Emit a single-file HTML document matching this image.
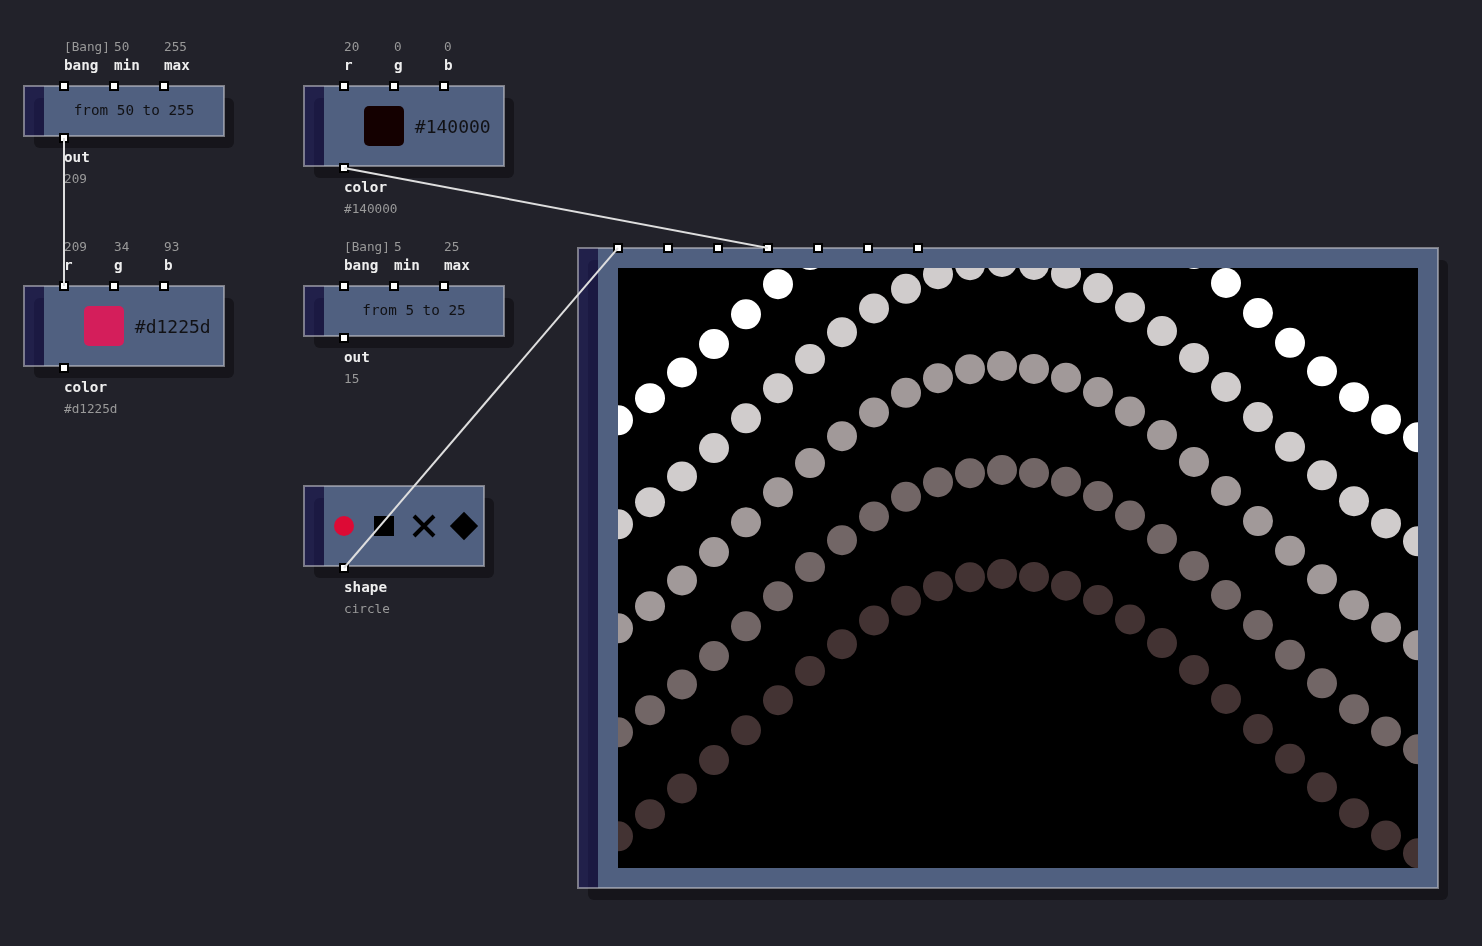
<!DOCTYPE html>
<html lang="en"><head><meta charset="utf-8"><title>RPD p5 patch</title>
<style>
html,body{margin:0;padding:0;background:#22222a;}
body{width:1482px;height:946px;overflow:hidden;font-family:"DejaVu Sans Mono","Liberation Mono",monospace;}
svg{display:block;position:absolute;left:0;top:0;will-change:transform;}
text{font-family:"DejaVu Sans Mono","Liberation Mono",monospace;}
.sh{fill:#16151b;}
.body{fill:#506080;}
.head{fill:rgba(32,30,106,0.5);}
.edge{fill:none;stroke:rgba(200,200,205,0.55);stroke-width:2;}
.cn{fill:#fff;stroke:#000;stroke-width:2;}
.lab{font-size:14.3px;font-weight:bold;fill:#eeeeee;}
.val{font-size:12.7px;fill:#999999;}
.bt{font-size:14.3px;fill:#111114;}
.hex{font-size:18px;fill:#111114;}
.mid{text-anchor:middle;}
</style></head>
<body>
<svg width="1482" height="946" viewBox="0 0 1482 946">
<defs><clipPath id="cv"><rect x="618" y="268" width="800" height="600"/></clipPath></defs>
<g id="shadows">
<rect class="sh" x="34" y="98" width="200" height="50" rx="6" ry="6"/>
<rect class="sh" x="314" y="98" width="200" height="80" rx="6" ry="6"/>
<rect class="sh" x="34" y="298" width="200" height="80" rx="6" ry="6"/>
<rect class="sh" x="314" y="298" width="200" height="50" rx="6" ry="6"/>
<rect class="sh" x="314" y="498" width="180" height="80" rx="6" ry="6"/>
<rect class="sh" x="588" y="260" width="860" height="640" rx="6" ry="6"/>
</g>
<g id="node-random-a">
<rect class="body" x="44" y="86" width="180" height="50"/>
<rect class="head" x="24" y="86" width="20" height="50"/>
<rect class="edge" x="24" y="86" width="200" height="50"/>
<text class="bt mid" x="134" y="114.8">from 50 to 255</text>
<text class="val" x="64" y="51">[Bang]</text>
<text class="lab" x="64" y="70">bang</text>
<text class="val" x="114" y="51">50</text>
<text class="lab" x="114" y="70">min</text>
<text class="val" x="164" y="51">255</text>
<text class="lab" x="164" y="70">max</text>
<text class="lab" x="64" y="162">out</text>
<text class="val" x="64" y="182.5">209</text>
<rect class="cn" x="60" y="82" width="8" height="8"/>
<rect class="cn" x="110" y="82" width="8" height="8"/>
<rect class="cn" x="160" y="82" width="8" height="8"/>
<rect class="cn" x="60" y="134" width="8" height="8"/>
</g>
<g id="node-color-b">
<rect class="body" x="324" y="86" width="180" height="80"/>
<rect class="head" x="304" y="86" width="20" height="80"/>
<rect class="edge" x="304" y="86" width="200" height="80"/>
<rect x="364" y="106" width="40" height="40" rx="5" ry="5" fill="#140000"/>
<text class="hex" x="414.8" y="133">#140000</text>
<text class="val" x="344" y="51">20</text>
<text class="lab" x="344" y="70">r</text>
<text class="val" x="394" y="51">0</text>
<text class="lab" x="394" y="70">g</text>
<text class="val" x="444" y="51">0</text>
<text class="lab" x="444" y="70">b</text>
<text class="lab" x="344" y="192">color</text>
<text class="val" x="344" y="212.5">#140000</text>
<rect class="cn" x="340" y="82" width="8" height="8"/>
<rect class="cn" x="390" y="82" width="8" height="8"/>
<rect class="cn" x="440" y="82" width="8" height="8"/>
<rect class="cn" x="340" y="164" width="8" height="8"/>
</g>
<g id="node-color-c">
<rect class="body" x="44" y="286" width="180" height="80"/>
<rect class="head" x="24" y="286" width="20" height="80"/>
<rect class="edge" x="24" y="286" width="200" height="80"/>
<rect x="84" y="306" width="40" height="40" rx="5" ry="5" fill="#d41e5b"/>
<text class="hex" x="134.8" y="333">#d1225d</text>
<text class="val" x="64" y="251">209</text>
<text class="lab" x="64" y="270">r</text>
<text class="val" x="114" y="251">34</text>
<text class="lab" x="114" y="270">g</text>
<text class="val" x="164" y="251">93</text>
<text class="lab" x="164" y="270">b</text>
<text class="lab" x="64" y="392">color</text>
<text class="val" x="64" y="412.5">#d1225d</text>
<rect class="cn" x="60" y="282" width="8" height="8"/>
<rect class="cn" x="110" y="282" width="8" height="8"/>
<rect class="cn" x="160" y="282" width="8" height="8"/>
<rect class="cn" x="60" y="364" width="8" height="8"/>
</g>
<g id="node-random-d">
<rect class="body" x="324" y="286" width="180" height="50"/>
<rect class="head" x="304" y="286" width="20" height="50"/>
<rect class="edge" x="304" y="286" width="200" height="50"/>
<text class="bt mid" x="414" y="314.8">from 5 to 25</text>
<text class="val" x="344" y="251">[Bang]</text>
<text class="lab" x="344" y="270">bang</text>
<text class="val" x="394" y="251">5</text>
<text class="lab" x="394" y="270">min</text>
<text class="val" x="444" y="251">25</text>
<text class="lab" x="444" y="270">max</text>
<text class="lab" x="344" y="362">out</text>
<text class="val" x="344" y="382.5">15</text>
<rect class="cn" x="340" y="282" width="8" height="8"/>
<rect class="cn" x="390" y="282" width="8" height="8"/>
<rect class="cn" x="440" y="282" width="8" height="8"/>
<rect class="cn" x="340" y="334" width="8" height="8"/>
</g>
<g id="node-shape">
<rect class="body" x="324" y="486" width="160" height="80"/>
<rect class="head" x="304" y="486" width="20" height="80"/>
<rect class="edge" x="304" y="486" width="180" height="80"/>
<circle cx="344" cy="526" r="10" fill="#dd0a35"/>
<rect x="374" y="516" width="20" height="20" fill="#000"/>
<path d="M414 516L434 536M434 516L414 536" stroke="#000" stroke-width="4" fill="none"/>
<path d="M464 511.86L478.14 526L464 540.14L449.86 526Z" fill="#000"/>
<text class="lab" x="344" y="592">shape</text>
<text class="val" x="344" y="612.5">circle</text>
<rect class="cn" x="340" y="564" width="8" height="8"/>
</g>
<g id="node-canvas">
<rect class="body" x="598" y="248" width="840" height="640"/>
<rect class="head" x="578" y="248" width="20" height="640"/>
<rect class="edge" x="578" y="248" width="860" height="640"/>
<rect x="618" y="268" width="800" height="600" fill="#000"/>
<g clip-path="url(#cv)">
<g fill="rgb(255,255,255)">
<circle cx="618" cy="420.30" r="15"/>
<circle cx="650" cy="398.18" r="15"/>
<circle cx="682" cy="372.43" r="15"/>
<circle cx="714" cy="344.08" r="15"/>
<circle cx="746" cy="314.27" r="15"/>
<circle cx="778" cy="284.22" r="15"/>
<circle cx="810" cy="255.12" r="15"/>
<circle cx="1194" cy="253.96" r="15"/>
<circle cx="1226" cy="282.99" r="15"/>
<circle cx="1258" cy="313.03" r="15"/>
<circle cx="1290" cy="342.87" r="15"/>
<circle cx="1322" cy="371.30" r="15"/>
<circle cx="1354" cy="397.19" r="15"/>
<circle cx="1386" cy="419.48" r="15"/>
<circle cx="1418" cy="437.27" r="15"/>
</g>
<g fill="rgb(208,204,204)">
<circle cx="618" cy="524.30" r="15"/>
<circle cx="650" cy="502.18" r="15"/>
<circle cx="682" cy="476.43" r="15"/>
<circle cx="714" cy="448.08" r="15"/>
<circle cx="746" cy="418.27" r="15"/>
<circle cx="778" cy="388.22" r="15"/>
<circle cx="810" cy="359.12" r="15"/>
<circle cx="842" cy="332.15" r="15"/>
<circle cx="874" cy="308.40" r="15"/>
<circle cx="906" cy="288.82" r="15"/>
<circle cx="938" cy="274.21" r="15"/>
<circle cx="970" cy="265.15" r="15"/>
<circle cx="1002" cy="262.00" r="15"/>
<circle cx="1034" cy="264.90" r="15"/>
<circle cx="1066" cy="273.72" r="15"/>
<circle cx="1098" cy="288.12" r="15"/>
<circle cx="1130" cy="307.51" r="15"/>
<circle cx="1162" cy="331.10" r="15"/>
<circle cx="1194" cy="357.96" r="15"/>
<circle cx="1226" cy="386.99" r="15"/>
<circle cx="1258" cy="417.03" r="15"/>
<circle cx="1290" cy="446.87" r="15"/>
<circle cx="1322" cy="475.30" r="15"/>
<circle cx="1354" cy="501.19" r="15"/>
<circle cx="1386" cy="523.48" r="15"/>
<circle cx="1418" cy="541.27" r="15"/>
</g>
<g fill="rgb(161,153,153)">
<circle cx="618" cy="628.30" r="15"/>
<circle cx="650" cy="606.18" r="15"/>
<circle cx="682" cy="580.43" r="15"/>
<circle cx="714" cy="552.08" r="15"/>
<circle cx="746" cy="522.27" r="15"/>
<circle cx="778" cy="492.22" r="15"/>
<circle cx="810" cy="463.12" r="15"/>
<circle cx="842" cy="436.15" r="15"/>
<circle cx="874" cy="412.40" r="15"/>
<circle cx="906" cy="392.82" r="15"/>
<circle cx="938" cy="378.21" r="15"/>
<circle cx="970" cy="369.15" r="15"/>
<circle cx="1002" cy="366.00" r="15"/>
<circle cx="1034" cy="368.90" r="15"/>
<circle cx="1066" cy="377.72" r="15"/>
<circle cx="1098" cy="392.12" r="15"/>
<circle cx="1130" cy="411.51" r="15"/>
<circle cx="1162" cy="435.10" r="15"/>
<circle cx="1194" cy="461.96" r="15"/>
<circle cx="1226" cy="490.99" r="15"/>
<circle cx="1258" cy="521.03" r="15"/>
<circle cx="1290" cy="550.87" r="15"/>
<circle cx="1322" cy="579.30" r="15"/>
<circle cx="1354" cy="605.19" r="15"/>
<circle cx="1386" cy="627.48" r="15"/>
<circle cx="1418" cy="645.27" r="15"/>
</g>
<g fill="rgb(114,102,102)">
<circle cx="618" cy="732.30" r="15"/>
<circle cx="650" cy="710.18" r="15"/>
<circle cx="682" cy="684.43" r="15"/>
<circle cx="714" cy="656.08" r="15"/>
<circle cx="746" cy="626.27" r="15"/>
<circle cx="778" cy="596.22" r="15"/>
<circle cx="810" cy="567.12" r="15"/>
<circle cx="842" cy="540.15" r="15"/>
<circle cx="874" cy="516.40" r="15"/>
<circle cx="906" cy="496.82" r="15"/>
<circle cx="938" cy="482.21" r="15"/>
<circle cx="970" cy="473.15" r="15"/>
<circle cx="1002" cy="470.00" r="15"/>
<circle cx="1034" cy="472.90" r="15"/>
<circle cx="1066" cy="481.72" r="15"/>
<circle cx="1098" cy="496.12" r="15"/>
<circle cx="1130" cy="515.51" r="15"/>
<circle cx="1162" cy="539.10" r="15"/>
<circle cx="1194" cy="565.96" r="15"/>
<circle cx="1226" cy="594.99" r="15"/>
<circle cx="1258" cy="625.03" r="15"/>
<circle cx="1290" cy="654.87" r="15"/>
<circle cx="1322" cy="683.30" r="15"/>
<circle cx="1354" cy="709.19" r="15"/>
<circle cx="1386" cy="731.48" r="15"/>
<circle cx="1418" cy="749.27" r="15"/>
</g>
<g fill="rgb(67,51,51)">
<circle cx="618" cy="836.30" r="15"/>
<circle cx="650" cy="814.18" r="15"/>
<circle cx="682" cy="788.43" r="15"/>
<circle cx="714" cy="760.08" r="15"/>
<circle cx="746" cy="730.27" r="15"/>
<circle cx="778" cy="700.22" r="15"/>
<circle cx="810" cy="671.12" r="15"/>
<circle cx="842" cy="644.15" r="15"/>
<circle cx="874" cy="620.40" r="15"/>
<circle cx="906" cy="600.82" r="15"/>
<circle cx="938" cy="586.21" r="15"/>
<circle cx="970" cy="577.15" r="15"/>
<circle cx="1002" cy="574.00" r="15"/>
<circle cx="1034" cy="576.90" r="15"/>
<circle cx="1066" cy="585.72" r="15"/>
<circle cx="1098" cy="600.12" r="15"/>
<circle cx="1130" cy="619.51" r="15"/>
<circle cx="1162" cy="643.10" r="15"/>
<circle cx="1194" cy="669.96" r="15"/>
<circle cx="1226" cy="698.99" r="15"/>
<circle cx="1258" cy="729.03" r="15"/>
<circle cx="1290" cy="758.87" r="15"/>
<circle cx="1322" cy="787.30" r="15"/>
<circle cx="1354" cy="813.19" r="15"/>
<circle cx="1386" cy="835.48" r="15"/>
<circle cx="1418" cy="853.27" r="15"/>
</g>
</g>
<rect class="cn" x="614" y="244" width="8" height="8"/>
<rect class="cn" x="664" y="244" width="8" height="8"/>
<rect class="cn" x="714" y="244" width="8" height="8"/>
<rect class="cn" x="764" y="244" width="8" height="8"/>
<rect class="cn" x="814" y="244" width="8" height="8"/>
<rect class="cn" x="864" y="244" width="8" height="8"/>
<rect class="cn" x="914" y="244" width="8" height="8"/>
</g>
<g id="links" stroke="#dedede" stroke-width="2" fill="none">
<path d="M64 138L64 286"/>
<path d="M344 168L768 248"/>
<path d="M344 568L618 248"/>
</g>
</svg>
</body></html>
